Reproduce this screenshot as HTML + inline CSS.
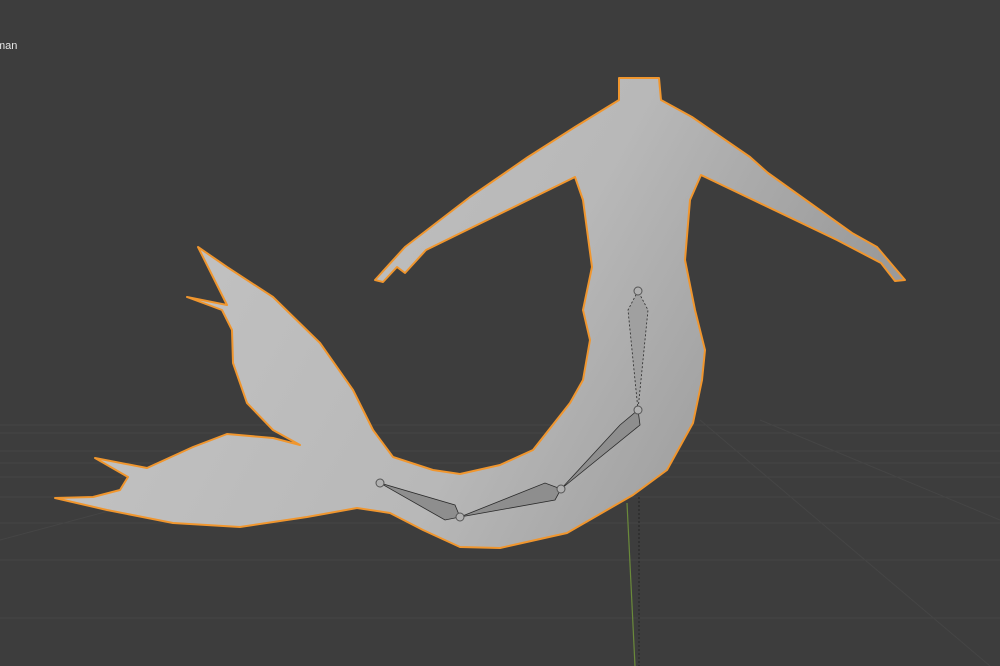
<!DOCTYPE html>
<html><head><style>
html,body{margin:0;padding:0;background:#3d3d3d;width:1000px;height:666px;overflow:hidden}
.t{position:absolute;left:-4px;top:40px;color:#e6e6e6;font:11px "Liberation Sans",sans-serif}
</style></head><body>
<svg width="1000" height="666" style="position:absolute;left:0;top:0">
<defs>
<linearGradient id="g" x1="0" y1="0" x2="1" y2="0.3">
<stop offset="0" stop-color="#c6c6c6"/><stop offset="0.65" stop-color="#b8b8b8"/><stop offset="1" stop-color="#9a9a9a"/>
</linearGradient>
</defs>
<g stroke="#454545" stroke-width="1">
<line x1="0" y1="425" x2="1000" y2="425"/><line x1="0" y1="433" x2="1000" y2="433"/>
<line x1="0" y1="451" x2="1000" y2="451"/><line x1="0" y1="463" x2="1000" y2="463"/>
<line x1="0" y1="477" x2="1000" y2="477"/><line x1="0" y1="497" x2="1000" y2="497"/>
<line x1="0" y1="523" x2="1000" y2="523"/><line x1="0" y1="560" x2="1000" y2="560"/>
<line x1="0" y1="618" x2="1000" y2="618"/>
<line x1="700" y1="420" x2="990" y2="666"/><line x1="760" y1="420" x2="1000" y2="520"/>
<line x1="0" y1="540" x2="300" y2="460"/>
</g>
<line x1="627" y1="503" x2="635" y2="666" stroke="#6a8a3a" stroke-width="1.2"/>
<line x1="639" y1="497" x2="639" y2="666" stroke="#222" stroke-width="1" stroke-dasharray="2,2"/>
<path fill="url(#g)" stroke="#f0962e" stroke-width="2" stroke-linejoin="round" d="
M619,78 L659,78 L661,100 L692,117 L750,157 L768,173 L852,233 L877,247 L905,280 L895,281 L881,263 L837,240 L701,175 L690,200 L685,260 L695,310
L705,350 L702,380 L693,423 L667,470 L633,495 L567,533 L500,548 L460,547 L423,530 L390,513 L357,508 L307,517 L240,527 L173,523 L107,510 L55,498
L93,497 L120,490 L128,477 L95,458 L147,468 L193,447 L227,434 L273,438 L300,445 L273,430 L247,403 L233,363 L232,330 L222,310 L187,297 L227,305 L198,247
L227,267 L273,297 L320,343 L353,390 L373,430 L393,457 L433,470 L460,474 L500,465 L533,450 L570,403 L583,380 L590,340 L583,310
L592,267 L583,200 L575,177 L426,250 L405,273 L397,267 L383,282 L375,280 L405,247 L470,197 L528,157 L575,127 L619,100 Z"/>
<g fill="#8e8e8e" stroke="#2a2a2a" stroke-width="0.8">
<polygon points="638,410 620,425 561,489 640,425"/>
<polygon points="561,489 545,483 460,517 555,500"/>
<polygon points="460,517 455,505 380,483 445,520"/>
<polygon points="638,291 628,310 638,410 648,310" fill="#a0a0a0" stroke-dasharray="2,2"/>
</g>
<g fill="#b0b0b0" stroke="#555" stroke-width="1">
<circle cx="638" cy="291" r="4"/><circle cx="638" cy="410" r="4"/><circle cx="561" cy="489" r="4"/><circle cx="460" cy="517" r="4"/><circle cx="380" cy="483" r="4"/>
</g>
</svg>
<div class="t">man</div>
</body></html>
